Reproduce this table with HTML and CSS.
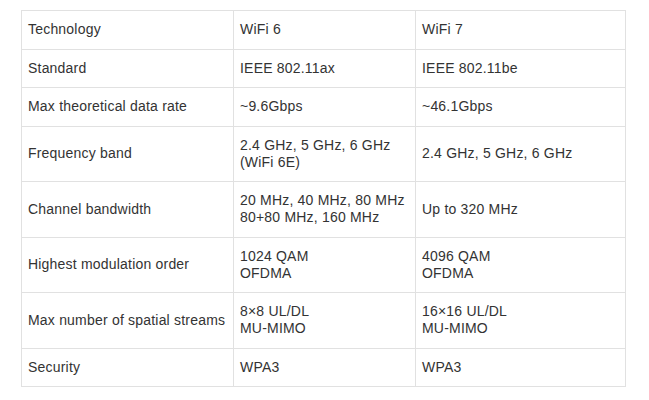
FILE: index.html
```
<!DOCTYPE html>
<html lang="en">
<head>
<meta charset="utf-8">
<title>WiFi 6 vs WiFi 7</title>
<link rel="stylesheet" href="styles.css">
</head>
<body>
<table class="spec">
  <colgroup>
    <col class="c1">
    <col class="c2">
    <col class="c3">
  </colgroup>
  <tbody>
    <tr><td>Technology</td><td>WiFi 6</td><td>WiFi 7</td></tr>
    <tr><td>Standard</td><td>IEEE 802.11ax</td><td>IEEE 802.11be</td></tr>
    <tr><td>Max theoretical data rate</td><td>~9.6Gbps</td><td>~46.1Gbps</td></tr>
    <tr><td>Frequency band</td><td>2.4 GHz, 5 GHz, 6 GHz<br>(WiFi 6E)</td><td>2.4 GHz, 5 GHz, 6 GHz</td></tr>
    <tr><td>Channel bandwidth</td><td>20 MHz, 40 MHz, 80 MHz<br>80+80 MHz, 160 MHz</td><td>Up to 320 MHz</td></tr>
    <tr><td>Highest modulation order</td><td>1024 QAM<br>OFDMA</td><td>4096 QAM<br>OFDMA</td></tr>
    <tr><td>Max number of spatial streams</td><td>8×8 UL/DL<br>MU-MIMO</td><td>16×16 UL/DL<br>MU-MIMO</td></tr>
    <tr><td>Security</td><td>WPA3</td><td>WPA3</td></tr>
  </tbody>
</table>
</body>
</html>
```

FILE: styles.css
```
html, body {
  margin: 0;
  padding: 0;
  background: #ffffff;
}
body {
  font-family: "Liberation Sans", Arial, Helvetica, sans-serif;
  font-size: 14px;
  letter-spacing: 0.2px;
  color: #333333;
}
.spec {
  border-collapse: collapse;
  table-layout: fixed;
  width: 604px;
  margin: 10px 0 0 21px;
}
.spec .c1 { width: 212px; }
.spec .c2 { width: 182px; }
.spec .c3 { width: 210px; }
.spec td {
  border: 1px solid #e1e1e1;
  padding: 10.25px 6px;
  line-height: 17px;
  vertical-align: middle;
  text-align: left;
}
```
